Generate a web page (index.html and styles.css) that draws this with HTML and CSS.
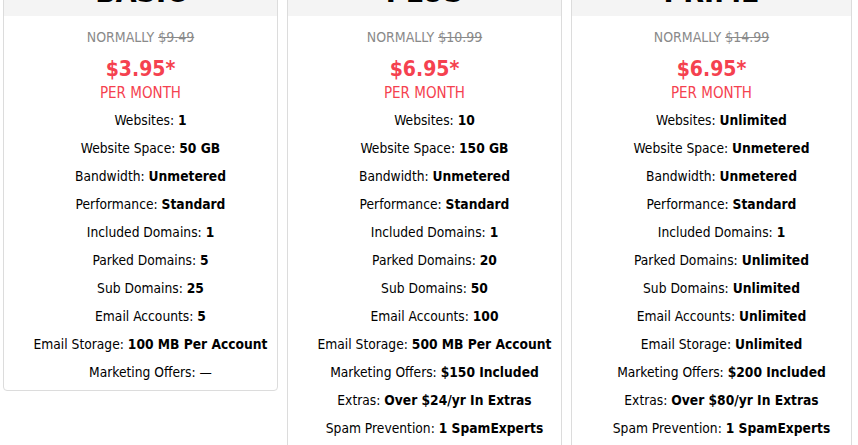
FILE: index.html
```html
<!DOCTYPE html>
<html>
<head>
<meta charset="utf-8">
<link rel="stylesheet" href="styles.css">
</head>
<body>
<div class="plans">
  <div class="card card-short">
    <div class="card-head">BASIC</div>
    <div class="card-body">
      <div class="normally">NORMALLY <s>$9.49</s></div>
      <div class="price">$3.95*</div>
      <div class="per">PER MONTH</div>
      <ul class="features">
        <li>Websites: <b>1</b></li>
        <li>Website Space: <b>50 GB</b></li>
        <li>Bandwidth: <b>Unmetered</b></li>
        <li>Performance: <b>Standard</b></li>
        <li>Included Domains: <b>1</b></li>
        <li>Parked Domains: <b>5</b></li>
        <li>Sub Domains: <b>25</b></li>
        <li>Email Accounts: <b>5</b></li>
        <li>Email Storage: <b>100 MB Per Account</b></li>
        <li>Marketing Offers: —</li>
      </ul>
    </div>
  </div>
  <div class="card">
    <div class="card-head">PLUS</div>
    <div class="card-body">
      <div class="normally">NORMALLY <s>$10.99</s></div>
      <div class="price">$6.95*</div>
      <div class="per">PER MONTH</div>
      <ul class="features">
        <li>Websites: <b>10</b></li>
        <li>Website Space: <b>150 GB</b></li>
        <li>Bandwidth: <b>Unmetered</b></li>
        <li>Performance: <b>Standard</b></li>
        <li>Included Domains: <b>1</b></li>
        <li>Parked Domains: <b>20</b></li>
        <li>Sub Domains: <b>50</b></li>
        <li>Email Accounts: <b>100</b></li>
        <li>Email Storage: <b>500 MB Per Account</b></li>
        <li>Marketing Offers: <b>$150 Included</b></li>
        <li>Extras: <b>Over $24/yr In Extras</b></li>
        <li>Spam Prevention: <b>1 SpamExperts</b></li>
      </ul>
    </div>
  </div>
  <div class="card card-wide">
    <div class="card-head">PRIME</div>
    <div class="card-body">
      <div class="normally">NORMALLY <s>$14.99</s></div>
      <div class="price">$6.95*</div>
      <div class="per">PER MONTH</div>
      <ul class="features">
        <li>Websites: <b>Unlimited</b></li>
        <li>Website Space: <b>Unmetered</b></li>
        <li>Bandwidth: <b>Unmetered</b></li>
        <li>Performance: <b>Standard</b></li>
        <li>Included Domains: <b>1</b></li>
        <li>Parked Domains: <b>Unlimited</b></li>
        <li>Sub Domains: <b>Unlimited</b></li>
        <li>Email Accounts: <b>Unlimited</b></li>
        <li>Email Storage: <b>Unlimited</b></li>
        <li>Marketing Offers: <b>$200 Included</b></li>
        <li>Extras: <b>Over $80/yr In Extras</b></li>
        <li>Spam Prevention: <b>1 SpamExperts</b></li>
      </ul>
    </div>
  </div>
</div>
</body>
</html>
```

FILE: styles.css
```css
html, body {
  margin: 0;
  padding: 0;
  background: #fff;
  overflow: hidden;
}
body {
  font-family: "DejaVu Sans Condensed", "DejaVu Sans", Verdana, sans-serif;
  color: #000;
}
.plans {
  display: grid;
  grid-template-columns: 275px 275px 281px;
  column-gap: 9px;
  align-items: start;
  margin: -45px 0 0 3px;
}
.card {
  border: 1px solid #dcdcdc;
  border-radius: 4px;
  background: #fff;
  text-align: center;
}
.card-head {
  height: 60px;
  background: #f4f4f4;
  border-radius: 4px 4px 0 0;
  font-size: 30px;
  font-weight: bold;
  line-height: 1;
  display: flex;
  align-items: flex-end;
  justify-content: center;
  box-sizing: border-box;
  padding-bottom: 9px;
}
.card-body {
  padding: 11px 0 40px;
}
.card-short .card-body {
  padding-bottom: 4px;
}
.normally {
  font-size: 14px;
  line-height: 20px;
  color: #8a8a8a;
}
.normally s {
  color: #8a8a8a;
}
.price {
  margin-top: 8px;
  font-size: 21px;
  font-weight: bold;
  line-height: 28px;
  color: #f5414f;
}
.per {
  font-size: 15px;
  line-height: 20px;
  color: #f5414f;
}
.features {
  list-style: none;
  margin: 3px 0 0;
  padding: 0 0 0 20px;
}
.features li {
  font-size: 13.7px;
  line-height: 28px;
  white-space: nowrap;
}
.features b {
  font-weight: bold;
}
```
